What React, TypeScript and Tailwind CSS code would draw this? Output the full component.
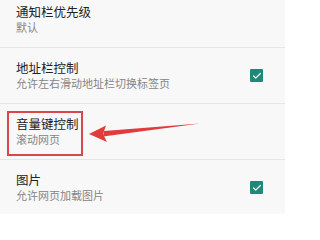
import { Check } from "lucide-react";

interface SettingRow {
  title: string;
  summary: string;
  checked?: boolean;
}

const rows: SettingRow[] = [
  { title: "通知栏优先级", summary: "默认" },
  { title: "地址栏控制", summary: "允许左右滑动地址栏切换标签页", checked: true },
  { title: "音量键控制", summary: "滚动网页" },
  { title: "图片", summary: "允许网页加载图片", checked: true },
];

function Checkbox() {
  return (
    <div className="w-[13px] h-[13px] rounded-[1px] bg-[#1d8a78] flex items-center justify-center">
      <Check className="w-[10px] h-[10px] text-white" strokeWidth={3} />
    </div>
  );
}

export default function App() {
  return (
    <div
      className="relative w-[285px] h-[214px] overflow-hidden bg-[#f8f8f8]"
      style={{ fontFamily: '"Noto Sans CJK SC", "Noto Sans", sans-serif' }}
    >
      <div className="-mt-2 flex flex-col">
        {rows.map((row) => (
          <div
            key={row.title}
            className="h-[56px] flex items-center justify-between pl-4 pr-[22px] border-b border-[#e6e6e6]"
          >
            <div className="flex flex-col">
              <span className="text-[12.5px] leading-[16px] text-[#222]">
                {row.title}
              </span>
              <span className="text-[11px] leading-[15px] text-[#858585]">
                {row.summary}
              </span>
            </div>
            {row.checked && <Checkbox />}
          </div>
        ))}
      </div>

      {/* annotation: red box + arrow */}
      <div className="absolute left-[7px] top-[111px] w-[76px] h-[45px] border-2 border-[#d8474a]" />
      <svg
        className="absolute left-0 top-0"
        width="285"
        height="214"
        viewBox="0 0 285 214"
      >
        <path d="M200 123.5 L104 131 L103 136.5 Z" fill="#e23b3b" />
        <path d="M89 134 L106 125.5 L103 134 L107 142 Z" fill="#e23b3b" />
      </svg>
    </div>
  );
}
